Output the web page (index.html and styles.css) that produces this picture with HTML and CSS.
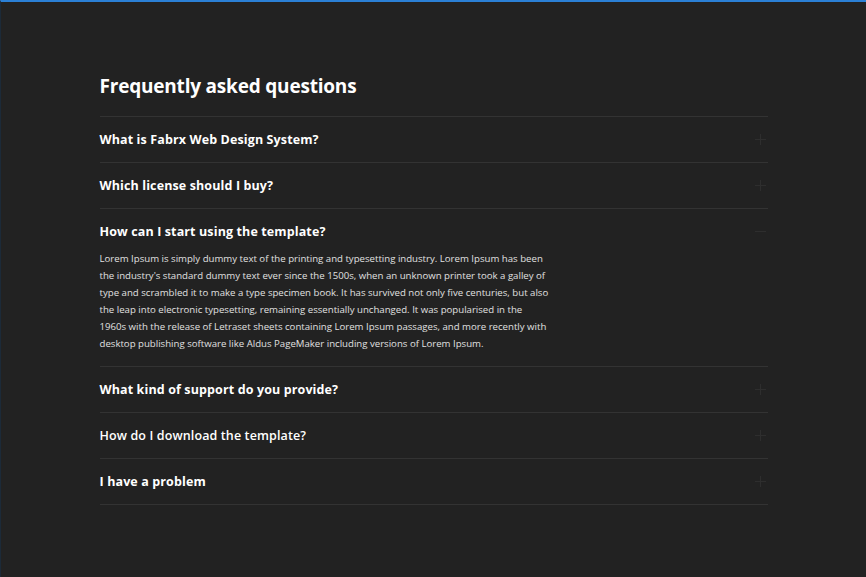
FILE: index.html
```
<!DOCTYPE html>
<html lang="en">
<head>
<meta charset="utf-8">
<title>FAQ</title>
<link rel="stylesheet" href="styles.css">
</head>
<body>
<div class="frame">
  <section class="faq">
    <h1 class="faq-title">Frequently asked questions</h1>
    <div class="faq-list">
      <div class="faq-item">
        <div class="faq-q"><span>What is Fabrx Web Design System?</span><svg class="ico" viewBox="0 0 12 12"><path d="M6 0v12M0 6h12"/></svg></div>
      </div>
      <div class="faq-item">
        <div class="faq-q"><span>Which license should I buy?</span><svg class="ico" viewBox="0 0 12 12"><path d="M6 0v12M0 6h12"/></svg></div>
      </div>
      <div class="faq-item open">
        <div class="faq-q"><span>How can I start using the template?</span><svg class="ico" viewBox="0 0 12 12"><path d="M0 6h12"/></svg></div>
        <p class="faq-a">Lorem Ipsum is simply dummy text of the printing and typesetting industry. Lorem Ipsum has been the industry's standard dummy text ever since the 1500s, when an unknown printer took a galley of type and scrambled it to make a type specimen book. It has survived not only five centuries, but also the leap into electronic typesetting, remaining essentially unchanged. It was popularised in the 1960s with the release of Letraset sheets containing Lorem Ipsum passages, and more recently with desktop publishing software like Aldus PageMaker including versions of Lorem Ipsum.</p>
      </div>
      <div class="faq-item">
        <div class="faq-q"><span>What kind of support do you provide?</span><svg class="ico" viewBox="0 0 12 12"><path d="M6 0v12M0 6h12"/></svg></div>
      </div>
      <div class="faq-item">
        <div class="faq-q light"><span>How do I download the template?</span><svg class="ico" viewBox="0 0 12 12"><path d="M6 0v12M0 6h12"/></svg></div>
      </div>
      <div class="faq-item">
        <div class="faq-q"><span>I have a problem</span><svg class="ico" viewBox="0 0 12 12"><path d="M6 0v12M0 6h12"/></svg></div>
      </div>
    </div>
  </section>
</div>
</body>
</html>
```
FILE: styles.css
```
html, body {
  margin: 0;
  padding: 0;
  background: #222222;
}
.frame {
  box-sizing: border-box;
  min-height: 577px;
  border-top: 2px solid #2b80d6;
  border-left: 1px solid #1c2a38;
  background: #222222;
  padding-top: 70px;
}
.faq {
  width: 668px;
  margin: 0 auto;
  color: #ffffff;
}
.faq-title {
  font-family: "Open Sans", sans-serif;
  font-weight: 700;
  font-size: 19px;
  letter-spacing: -0.2px;
  line-height: 28px;
  margin: 0 0 16px 0;
}
.faq-list {
  border-bottom: 1px solid #333333;
}
.faq-item {
  border-top: 1px solid #333333;
}
.faq-q {
  height: 45px;
  display: flex;
  align-items: center;
  justify-content: space-between;
  font-family: "Open Sans", sans-serif;
  font-weight: 700;
  font-size: 12.5px;
  letter-spacing: 0.12px;
  color: #ffffff;
}
.faq-q.light {
  font-weight: 600;
}
.ico {
  width: 11px;
  height: 11px;
  margin-right: 2px;
  stroke: #2e2e2e;
  stroke-width: 1.2;
  fill: none;
}
.faq-a {
  margin: -4px 0 0 0;
  padding-bottom: 14px;
  max-width: 449px;
  font-family: "Open Sans", sans-serif;
  font-size: 9.65px;
  line-height: 17px;
  color: #e0e0e0;
}
```
